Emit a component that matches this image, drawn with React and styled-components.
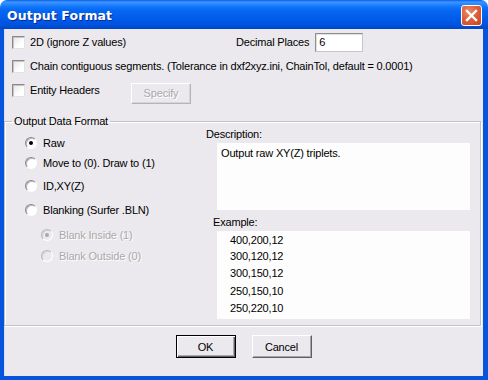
import React from "react";
import styled, { createGlobalStyle } from "styled-components";

const GlobalStyle = createGlobalStyle`
  html, body {
    margin: 0;
    padding: 0;
    background: #ffffff;
  }
  body {
    font-family: "Liberation Sans", Arial, sans-serif;
    font-size: 11px;
    letter-spacing: -0.18px;
    color: #000;
  }
`;

const radios = [
  { label: "Raw", checked: true, mt: 0 },
  { label: "Move to (0). Draw to (1)", mt: 0 },
  { label: "ID,XY(Z)", mt: 3 },
  { label: "Blanking (Surfer .BLN)", mt: 4 },
  { label: "Blank Inside (1)", checked: true, disabled: true, sub: true, mt: 5 },
  { label: "Blank Outside (0)", disabled: true, sub: true, mt: 1 },
];

const exampleLines = [
  { text: "400,200,12", h: 16 },
  { text: "300,120,12", h: 16 },
  { text: "300,150,12", h: 18 },
  { text: "250,150,10", h: 18 },
  { text: "250,220,10", h: 16 },
];

const Dialog = () => {
  return (
    <>
      <GlobalStyle />
      <Window>
        <TitleBar>
          <Title>Output Format</Title>
          <CloseButton aria-label="Close">
            <svg width="13" height="13" viewBox="0 0 13 13">
              <path d="M2 2 L11 11 M11 2 L2 11" stroke="#fff" strokeWidth="2.4" strokeLinecap="square" />
            </svg>
          </CloseButton>
        </TitleBar>
        <Frame>
          <Options>
            <Row>
              <CheckItem $width={224}>
                <CheckBox />
                2D (ignore Z values)
              </CheckItem>
              <FieldLabel>Decimal Places</FieldLabel>
              <NumberBox>6</NumberBox>
            </Row>
            <Row>
              <CheckItem>
                <CheckBox />
                Chain contiguous segments. (Tolerance in dxf2xyz.ini, ChainTol, default = 0.0001)
              </CheckItem>
            </Row>
            <Row>
              <CheckItem $width={119}>
                <CheckBox />
                Entity Headers
              </CheckItem>
              <Button $disabled $offset={6}>Specify</Button>
            </Row>
          </Options>

          <GroupBox>
            <Legend>Output Data Format</Legend>
            <GroupBody>
              <RadioList>
                {radios.map((r) => (
                  <RadioItem key={r.label} $sub={r.sub} $mt={r.mt} $disabled={r.disabled}>
                    <Radio $checked={r.checked} $disabled={r.disabled} />
                    {r.label}
                  </RadioItem>
                ))}
              </RadioList>
              <InfoColumn>
                <InfoLabel>Description:</InfoLabel>
                <TextPanel $height={67} $pad="4px 4px">
                  Output raw XY(Z) triplets.
                </TextPanel>
                <InfoLabel $indent={7} $mt={6}>Example:</InfoLabel>
                <TextPanel $height={88} $pad="1px 13px">
                  {exampleLines.map((l) => (
                    <ExampleLine key={l.text + l.h} style={{ height: l.h }}>
                      {l.text}
                    </ExampleLine>
                  ))}
                </TextPanel>
              </InfoColumn>
            </GroupBody>
          </GroupBox>

          <ButtonRow>
            <Button $default>OK</Button>
            <Button>Cancel</Button>
          </ButtonRow>
        </Frame>
      </Window>
    </>
  );
};

const Window = styled.div`
  width: 488px;
  height: 380px;
  display: flex;
  flex-direction: column;
  border-radius: 7px 7px 0 0;
  overflow: hidden;
`;

const TitleBar = styled.div`
  height: 29px;
  flex: none;
  display: flex;
  align-items: center;
  justify-content: space-between;
  padding: 0 6px 0 7px;
  box-sizing: border-box;
  background: linear-gradient(
    180deg,
    #0a5de8 0px,
    #3d95ff 2px,
    #2b88ff 4px,
    #0f74fb 7px,
    #0566f2 11px,
    #0260ec 16px,
    #0058e6 21px,
    #0052dd 25px,
    #0045c8 29px
  );
`;

const Title = styled.span`
  color: #fff;
  font-family: "DejaVu Sans", "Liberation Sans", sans-serif;
  font-weight: bold;
  font-size: 12.5px;
  letter-spacing: 0.1px;
  text-shadow: 1px 1px 0 #0b2b8f;
  margin-top: 1px;
`;

const CloseButton = styled.div`
  width: 21px;
  height: 21px;
  box-sizing: border-box;
  margin-top: 1px;
  border: 1px solid #fff;
  border-radius: 3px;
  display: flex;
  align-items: center;
  justify-content: center;
  background: radial-gradient(circle at 35% 30%, #ec8a66 0%, #e0603c 45%, #c8421f 100%);
`;

const Frame = styled.div`
  flex: 1;
  display: flex;
  flex-direction: column;
  background: #ebe9ed;
  border-style: solid;
  border-color: #0855dd;
  border-width: 0 5px 4px 4px;
  box-shadow: inset 1px 0 #d6dff7;
`;

const Options = styled.div`
  display: flex;
  flex-direction: column;
  padding: 1px 0 0 8px;
`;

const Row = styled.div`
  height: 24px;
  display: flex;
  align-items: center;
`;

const CheckItem = styled.label`
  display: flex;
  align-items: center;
  gap: 5px;
  width: ${(p) => (p.$width ? `${p.$width}px` : "auto")};
  flex: none;
  white-space: nowrap;
`;

const CheckBox = styled.span`
  width: 13px;
  height: 13px;
  box-sizing: border-box;
  flex: none;
  border: 1px solid;
  border-color: #8a8a8a #e2e2e2 #e2e2e2 #8a8a8a;
  box-shadow: inset 1px 1px #c4c4c4;
  background: linear-gradient(135deg, #e6e6e6 0%, #ffffff 70%);
`;

const FieldLabel = styled.span`
  white-space: nowrap;
`;

const NumberBox = styled.div`
  width: 48px;
  height: 19px;
  box-sizing: border-box;
  margin-left: 6px;
  padding: 2px 3px;
  background: #fff;
  border: 1px solid;
  border-color: #8f8f8f #c6c6c6 #c6c6c6 #8f8f8f;
  box-shadow: inset 1px 1px #e0e0e0;
  line-height: 13px;
`;

const Button = styled.div`
  width: 60px;
  height: ${(p) => (p.$disabled ? 21 : 23)}px;
  box-sizing: border-box;
  display: flex;
  align-items: center;
  justify-content: center;
  margin-top: ${(p) => p.$offset || 0}px;
  background: #ebe9ed;
  border: 1px solid;
  border-color: ${(p) =>
    p.$default ? "#000" : p.$disabled ? "#fff #b4b4b4 #b4b4b4 #fff" : "#fff #5f5f5f #5f5f5f #fff"};
  box-shadow: ${(p) =>
    p.$default
      ? "inset 1px 1px #fff, inset -1px -1px #5f5f5f, inset -2px -2px #a8a8a8"
      : p.$disabled
      ? "inset -1px -1px #d6d6d6"
      : "inset -1px -1px #a8a8a8"};
  color: ${(p) => (p.$disabled ? "#a9a9a9" : "#000")};
  text-shadow: ${(p) => (p.$disabled ? "1px 1px 0 #fff" : "none")};
  font-size: 11px;
`;

const GroupBox = styled.fieldset`
  margin: 13px 2px 0 0;
  padding: 0 10px 6px 20px;
  min-width: 0;
  border: 1px solid #c3c1c6;
  box-shadow: 1px 1px 0 #fff, inset 1px 1px 0 #fff;
`;

const Legend = styled.legend`
  margin-left: -13px;
  padding: 0 2px;
  line-height: 13px;
  font-size: 11px;
`;

const GroupBody = styled.div`
  display: grid;
  grid-template-columns: 181px 1fr;
`;

const RadioList = styled.div`
  display: flex;
  flex-direction: column;
  padding-top: 5px;
`;

const RadioItem = styled.div`
  height: 20px;
  display: flex;
  align-items: center;
  gap: 6px;
  margin-top: ${(p) => p.$mt}px;
  padding-left: ${(p) => (p.$sub ? 16 : 0)}px;
  color: ${(p) => (p.$disabled ? "#a9a9a9" : "#000")};
  text-shadow: ${(p) => (p.$disabled ? "1px 1px 0 #fff" : "none")};
  white-space: nowrap;
`;

const Radio = styled.span`
  width: 12px;
  height: 12px;
  box-sizing: border-box;
  flex: none;
  border-radius: 50%;
  border: 1px solid;
  border-color: ${(p) => (p.$disabled ? "#b8b8b8 #fff #fff #b8b8b8" : "#8a8a8a #fff #fff #8a8a8a")};
  box-shadow: inset 1px 1px ${(p) => (p.$disabled ? "#d6d6d6" : "#b8b8b8")};
  background: ${(p) => (p.$disabled ? "#ebe9ed" : "#fff")};
  display: flex;
  align-items: center;
  justify-content: center;
  &::after {
    content: "";
    width: 4px;
    height: 4px;
    border-radius: 50%;
    background: ${(p) => (p.$disabled ? "#a9a9a9" : "#000")};
    display: ${(p) => (p.$checked ? "block" : "none")};
  }
`;

const InfoColumn = styled.div`
  display: flex;
  flex-direction: column;
`;

const InfoLabel = styled.div`
  line-height: 13px;
  margin-left: ${(p) => p.$indent || 0}px;
  margin-top: ${(p) => p.$mt || 0}px;
`;

const TextPanel = styled.div`
  margin: 2px 0 0 11px;
  height: ${(p) => p.$height}px;
  box-sizing: border-box;
  padding: ${(p) => p.$pad};
  background: #fcfdfc;
  line-height: 13px;
  font-size: 11px;
`;

const ExampleLine = styled.div`
  display: flex;
  align-items: center;
`;

const ButtonRow = styled.div`
  display: flex;
  justify-content: center;
  gap: 16px;
  margin-top: 9px;
`;

export default Dialog;
